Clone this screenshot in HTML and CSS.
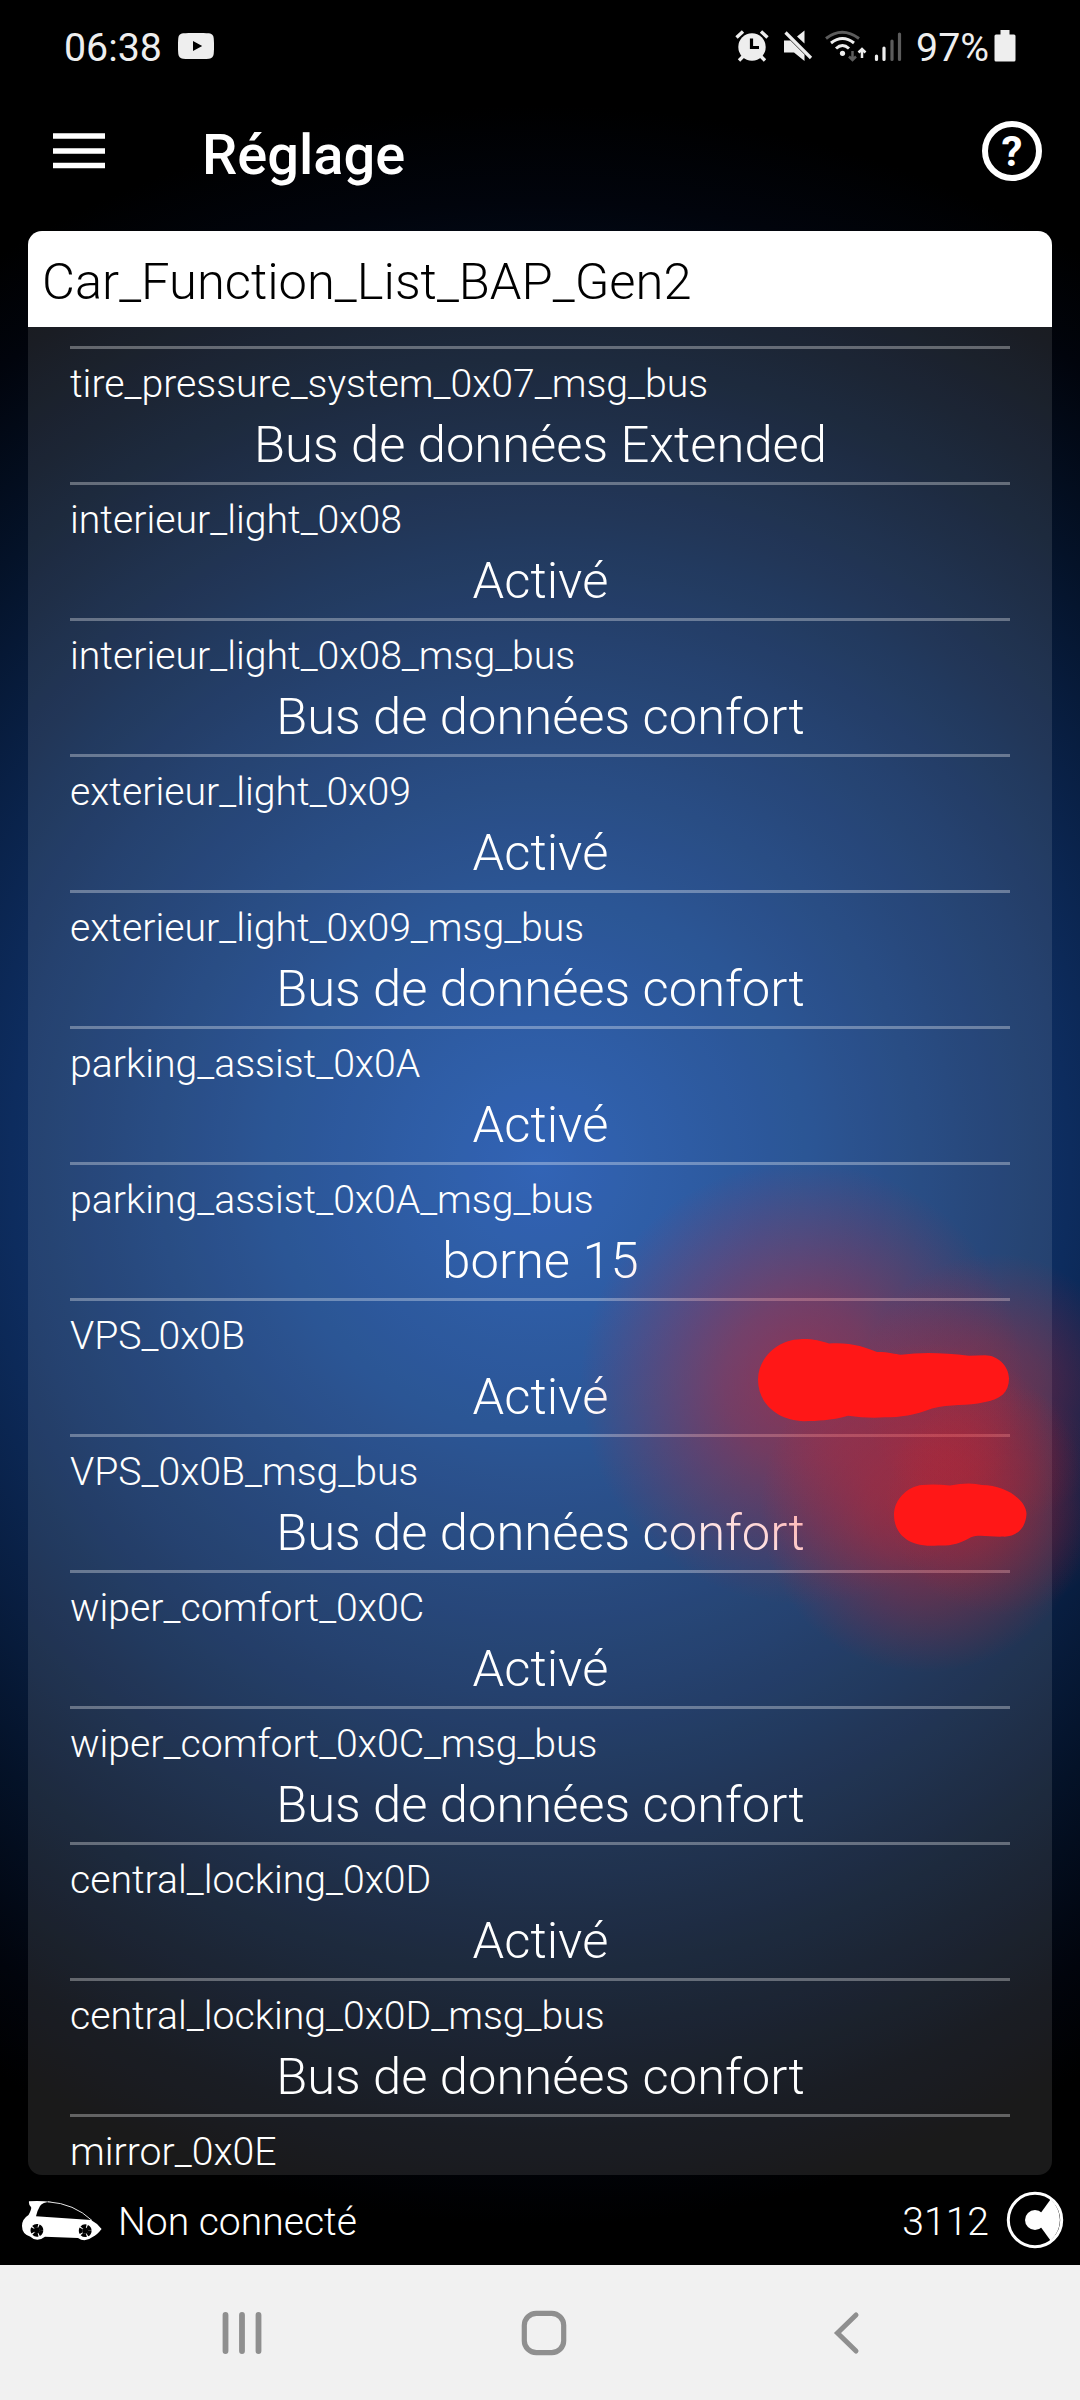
FILE: index.html
```html
<!DOCTYPE html>
<html lang="fr">
<head>
<meta charset="utf-8">
<title>Réglage</title>
<link rel="stylesheet" href="styles.css">
</head>
<body>
<div class="screen">
  <div class="status">
    <span class="clock">06:38</span>
    <svg class="yt" width="36" height="26" viewBox="0 0 36 26"><path fill="#eee" fill-rule="evenodd" d="M5 .3Q18-.6 31 .3Q35.300 .8 35.700 5Q36.400 13 35.700 21Q35.300 25.200 31 25.700Q18 26.600 5 25.700Q.7 25.200 .3 21Q-.4 13 .3 5Q.7 .8 5 .3ZM15 8V18L24.200 13Z"/></svg>
    <svg class="sysicons" width="170" height="34" viewBox="735 29 170 34">
      <circle cx="753" cy="47" r="13.700" fill="#eee"/>
      <path d="M737.500 37.500l6.500-6M768.500 37.500l-6.500-6M740 60.500l5-5M766 60.500l-5-5" stroke="#eee" stroke-width="3.400"/>
      <path d="M752.500 38.500v9H760" fill="none" stroke="#000" stroke-width="3.200"/>
      <path fill="#eee" d="M785 40.500h6.500L805.500 54.500V61L795 52.500H785zM798 36.500l7.500-6v13z"/>
      <path d="M786.500 32.500l25.500 25.500" stroke="#eee" stroke-width="3.200"/>
      <g fill="none">
        <path d="M827 38.500Q843 26 860 38.500" stroke="#5c5c5c" stroke-width="3"/>
        <path d="M832 43Q843.500 34 855 43" stroke="#eee" stroke-width="3"/>
        <path d="M837 48.500Q843.500 42.500 850 48.500" stroke="#eee" stroke-width="3"/>
        <path d="M853.500 51v9M850 56.500l3.500 3.500 3.500-3.500" stroke="#5c5c5c" stroke-width="2.500"/>
        <path d="M863 58v-9M859.500 52.500l3.500-3.500 3.500 3.500" stroke="#eee" stroke-width="2.500"/>
      </g>
      <circle cx="843.500" cy="53.300" r="2.600" fill="#eee"/>
      <g stroke-width="3.200" stroke-linecap="round">
        <path d="M877.500 56v3.500M885 48v11.500" stroke="#eee"/>
        <path d="M893 41v18.500M900.500 34v25.500" stroke="#5c5c5c"/>
      </g>
    </svg>
    <span class="percent">97%</span>
    <svg class="battery" width="22" height="32" viewBox="0 0 22 32"><path fill="#eee" d="M6.500 0h9v4.500H20a1.500 1.500 0 0 1 1.500 1.500V30a1.500 1.500 0 0 1-1.500 1.500H2A1.500 1.500 0 0 1 .5 30V6A1.500 1.500 0 0 1 2 4.500h4.500z"/></svg>
  </div>
  <header class="appbar">
    <svg class="burger" width="52" height="36" viewBox="0 0 52 36"><path d="M0 3h52M0 18h52M0 32.500h52" stroke="#fff" stroke-width="5.600"/></svg>
    <h1 class="title">Réglage</h1>
    <span class="help">?</span>
  </header>
  <main class="panel">
    <div class="panel-head">Car_Function_List_BAP_Gen2</div>
    <div class="rows">
      <div class="row"><div class="label">tire_pressure_system_0x07_msg_bus</div><div class="value">Bus de données Extended</div></div>
      <div class="row"><div class="label">interieur_light_0x08</div><div class="value">Activé</div></div>
      <div class="row"><div class="label">interieur_light_0x08_msg_bus</div><div class="value">Bus de données confort</div></div>
      <div class="row"><div class="label">exterieur_light_0x09</div><div class="value">Activé</div></div>
      <div class="row"><div class="label">exterieur_light_0x09_msg_bus</div><div class="value">Bus de données confort</div></div>
      <div class="row"><div class="label">parking_assist_0x0A</div><div class="value">Activé</div></div>
      <div class="row"><div class="label">parking_assist_0x0A_msg_bus</div><div class="value">borne 15</div></div>
      <div class="row"><div class="label">VPS_0x0B</div><div class="value">Activé</div></div>
      <div class="row"><div class="label">VPS_0x0B_msg_bus</div><div class="value">Bus de données confort</div></div>
      <div class="row"><div class="label">wiper_comfort_0x0C</div><div class="value">Activé</div></div>
      <div class="row"><div class="label">wiper_comfort_0x0C_msg_bus</div><div class="value">Bus de données confort</div></div>
      <div class="row"><div class="label">central_locking_0x0D</div><div class="value">Activé</div></div>
      <div class="row"><div class="label">central_locking_0x0D_msg_bus</div><div class="value">Bus de données confort</div></div>
      <div class="row"><div class="label">mirror_0x0E</div></div>
    </div>
  </main>
  <footer class="footer">
    <svg class="car" width="82" height="42" viewBox="21 2198 82 42">
      <path fill="#fff" d="M29 2200.300Q40 2199.500 52 2201Q43 2200.500 40 2205Q37.500 2209 36 2215.300L91 2219Q97 2222 101.600 2228Q97 2234 92.500 2236Q85 2242 78 2237L45 2235.700Q37 2242 30 2235.500Q22 2233 22 2225Q22 2218 28.500 2214Q32 2208 31 2206Q28.500 2204 29 2200.300Z"/>
      <path d="M48 2200.800Q74 2202.500 92 2219.500" fill="none" stroke="#fff" stroke-width=".9"/>
      <g fill="none" stroke="#000" stroke-width="3.600"><circle cx="36.900" cy="2229.300" r="4.600" stroke-dasharray="4.800 1"/><circle cx="85.200" cy="2229.700" r="4.600" stroke-dasharray="4.800 1"/></g>
      <g fill="#000"><circle cx="36.900" cy="2229.300" r="3"/><circle cx="85.200" cy="2229.700" r="3"/></g>
    </svg>
    <span class="conn">Non connecté</span>
    <span class="count">3112</span>
    <svg class="dial" width="58" height="58" viewBox="-29 -29 58 58"><circle r="26.700" fill="none" stroke="#fff" stroke-width="3"/><circle r="10" fill="#fff"/><path fill="#fff" d="M5 -6L15.500 -20.500A27 27 0 0 1 15.500 20.500L5 6z"/></svg>
  </footer>
  <nav class="navbar">
    <svg class="nav-icon" viewBox="0 0 48 48"><path d="M7.500 6v36M24 6v36M40.500 6v36" stroke="#8f8f8f" stroke-width="5.800" stroke-linecap="round"/></svg>
    <svg class="nav-icon" viewBox="0 0 48 48"><rect x="3.300" y="4.300" width="39.400" height="39.400" rx="12" fill="none" stroke="#8f8f8f" stroke-width="5.200"/></svg>
    <svg class="nav-icon" viewBox="0 0 48 48"><path d="M32 6L13.500 24L32 42" fill="none" stroke="#8f8f8f" stroke-width="5" stroke-linecap="round"/></svg>
  </nav>
  <svg class="scribble" width="1080" height="2400" viewBox="0 0 1080 2400">
    <defs>
      <radialGradient id="glow"><stop offset="0" stop-color="#ff1717" stop-opacity=".46"/><stop offset=".35" stop-color="#ff1717" stop-opacity=".34"/><stop offset=".7" stop-color="#ff1717" stop-opacity=".16"/><stop offset="1" stop-color="#ff1717" stop-opacity="0"/></radialGradient>
    </defs>
    <g fill="url(#glow)"><circle cx="802" cy="1383" r="222"/><circle cx="995" cy="1388" r="135" opacity=".72"/><circle cx="925" cy="1508" r="165"/><circle cx="1000" cy="1500" r="115" opacity=".5"/></g>
    <g fill="#ff1717" transform="translate(0 -122.640) scale(1 1.109500)">
      <path d="M758 1354C758 1335 777 1318 800 1317.500C812 1317 820 1319 829 1321.500C850 1320 866 1325 877 1329C890 1329 895 1331 901 1331.500Q930 1328 969 1332.500L985 1332C998 1332 1009 1342 1009 1353C1009 1365 1001 1372 984 1374.500C968 1378 950 1376 932 1380C915 1386 900 1388 885 1388Q866 1389 848 1386.500C830 1391 818 1391 804 1391.500C778 1391 758 1376 758 1354Z"/>
      <path d="M894 1476C894 1461 909 1450 922 1449Q935 1448 950 1449.500Q969 1446 982 1449C1005 1449 1026 1462 1026.500 1475C1026 1488 1016 1496 1003 1495.500C990 1496 980 1493 971 1496C960 1502 950 1504 938 1503.500C905 1506 894 1490 894 1476Z"/>
    </g>
  </svg>
</div>
</body>
</html>
```
FILE: styles.css
```css
* { box-sizing: border-box; }
body { margin: 0; background: #000; font-family: Roboto, sans-serif; color: #fff; }
.screen {
  position: relative;
  display: flex;
  flex-direction: column;
  width: 1080px;
  height: 2400px;
  overflow: hidden;
  background: radial-gradient(circle 1060px at 540px 1165px, #1b53ae 0, #14438a 25%, #0d2c5e 50%, #041228 76%, #01040c 91%, #000 100%);
}
.status { display: flex; align-items: center; height: 92px; padding: 0 64px; color: #eee; font-size: 39.300px; line-height: 47px; }
.clock, .percent { padding-top: 4px; }
.yt { margin-left: 16px; }
.sysicons { margin-left: auto; }
.percent { margin-left: 12px; }
.battery { margin-left: 5px; }
.appbar { display: flex; align-items: center; height: 139px; padding: 0 38px 21px 53px; }
.title { margin: 8px 0 0 97px; font-size: 56px; line-height: 66px; font-weight: 500; }
.help { margin-left: auto; width: 60px; height: 60px; border: 6px solid #fff; border-radius: 50%; text-align: center; font-size: 42px; line-height: 49px; font-weight: 700; }
.panel { display: flex; flex-direction: column; height: 1944px; margin: 0 28px; border-radius: 14px; overflow: hidden; background: rgba(255, 255, 255, .1); font-weight: 300; }
.panel-head { flex: none; height: 96px; padding: 21px 14px; background: #fff; color: #000; font-size: 50.700px; line-height: 60px; }
.rows { flex: none; padding: 19px 42px 0; }
.row { height: 136px; border-top: 3px solid rgba(255, 255, 255, .32); }
.label { padding-top: 10px; font-size: 39.200px; line-height: 50px; }
.value { padding: 6px 0 0 1px; font-size: 50.700px; line-height: 60px; text-align: center; }
.footer { display: flex; align-items: center; height: 90px; padding: 0 16px 0 21px; font-size: 39.100px; line-height: 46px; font-weight: 300; }
.conn, .count { padding-top: 3px; }
.conn { margin-left: 15px; }
.count { margin-left: auto; }
.dial { margin-left: 17px; }
.navbar { display: flex; justify-content: space-between; align-items: center; height: 135px; padding: 0 208px 0 218px; background: #f1f1f1; }
.nav-icon { width: 48px; height: 48px; }
.scribble { position: absolute; left: 0; top: 0; }
```
